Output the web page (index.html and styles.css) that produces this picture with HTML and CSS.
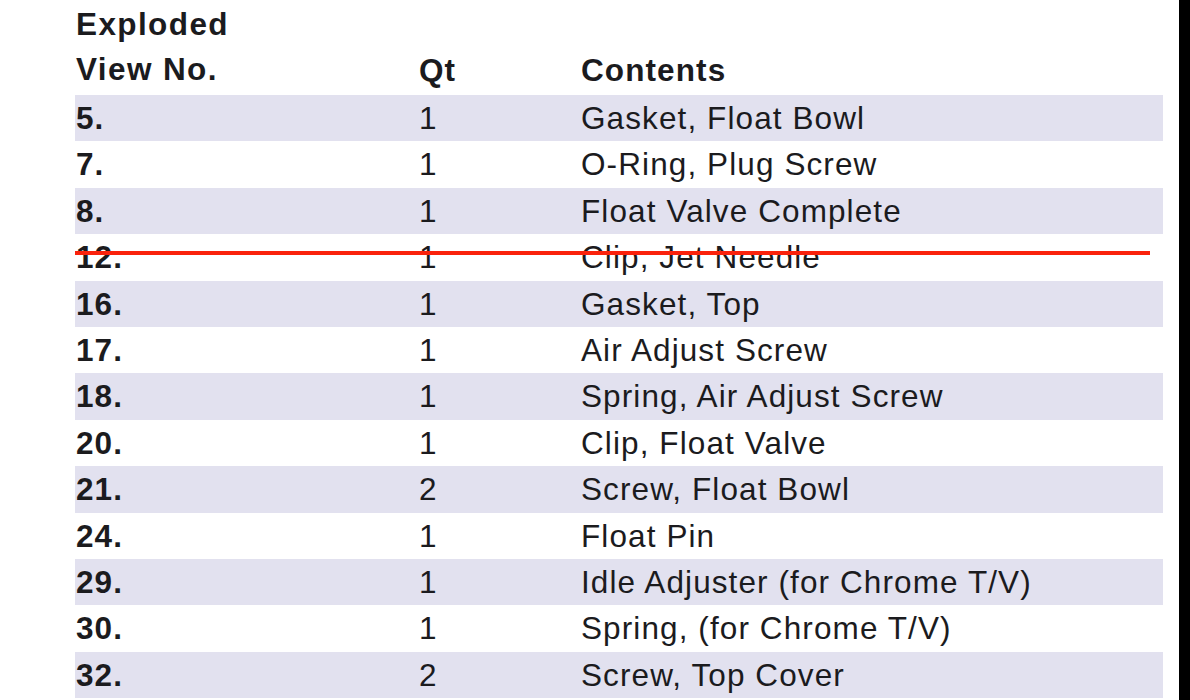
FILE: index.html
```html
<!DOCTYPE html>
<html lang="en">
<head>
<meta charset="utf-8">
<title>Parts list</title>
<link rel="stylesheet" href="styles.css">
</head>
<body>
<div class="screen">
  <main class="page">
    <div class="table">
      <div class="head">
        <div class="c1">Exploded<br>View No.</div>
        <div class="c2">Qt</div>
        <div class="c3">Contents</div>
      </div>
      <div class="row shade"><div class="c1">5.</div><div class="c2">1</div><div class="c3">Gasket, Float Bowl</div></div>
      <div class="row"><div class="c1">7.</div><div class="c2">1</div><div class="c3">O-Ring, Plug Screw</div></div>
      <div class="row shade"><div class="c1">8.</div><div class="c2">1</div><div class="c3">Float Valve Complete</div></div>
      <div class="row struck"><div class="c1">12.</div><div class="c2">1</div><div class="c3">Clip, Jet Needle</div><span class="strike"></span></div>
      <div class="row shade"><div class="c1">16.</div><div class="c2">1</div><div class="c3">Gasket, Top</div></div>
      <div class="row"><div class="c1">17.</div><div class="c2">1</div><div class="c3">Air Adjust Screw</div></div>
      <div class="row shade"><div class="c1">18.</div><div class="c2">1</div><div class="c3">Spring, Air Adjust Screw</div></div>
      <div class="row"><div class="c1">20.</div><div class="c2">1</div><div class="c3">Clip, Float Valve</div></div>
      <div class="row shade"><div class="c1">21.</div><div class="c2">2</div><div class="c3">Screw, Float Bowl</div></div>
      <div class="row"><div class="c1">24.</div><div class="c2">1</div><div class="c3">Float Pin</div></div>
      <div class="row shade"><div class="c1">29.</div><div class="c2">1</div><div class="c3">Idle Adjuster (for Chrome T/V)</div></div>
      <div class="row"><div class="c1">30.</div><div class="c2">1</div><div class="c3">Spring, (for Chrome T/V)</div></div>
      <div class="row shade"><div class="c1">32.</div><div class="c2">2</div><div class="c3">Screw, Top Cover</div></div>
    </div>
  </main>
  <div class="edge"></div>
</div>
</body>
</html>
```

FILE: styles.css
```css
html, body {
  margin: 0;
  padding: 0;
  background: #ffffff;
}

.screen {
  display: flex;
  width: 1190px;
  height: 700px;
  overflow: hidden;
}

.page {
  flex: 1;
  background: #ffffff;
  padding-left: 75px;
  padding-right: 16px;
}

.edge {
  width: 11px;
  background: #000000;
}

.table {
  display: flex;
  flex-direction: column;
  font-family: "Liberation Sans", Arial, sans-serif;
  font-size: 31.5px;
  letter-spacing: 1.1px;
  color: #1b1b1e;
}

.head,
.row {
  display: grid;
  grid-template-columns: 344px 162px 1fr;
}

.head {
  height: 95px;
  box-sizing: border-box;
  padding-top: 2px;
  font-weight: bold;
  line-height: 45px;
  align-items: start;
}

.head .c1 {
  letter-spacing: 1.4px;
}

.head .c2,
.head .c3 {
  align-self: start;
  padding-top: 46px;
}

.row {
  height: 46.4px;
  line-height: 46.4px;
  position: relative;
}

.row.shade {
  background: #e2e1ef;
}

.c1 {
  padding-left: 1px;
  white-space: nowrap;
}

.row .c1 {
  font-weight: bold;
}

.c2,
.c3 {
  white-space: nowrap;
}

.strike {
  position: absolute;
  left: 0;
  top: 17px;
  width: 1075px;
  height: 4px;
  background: #fa220c;
}
```
